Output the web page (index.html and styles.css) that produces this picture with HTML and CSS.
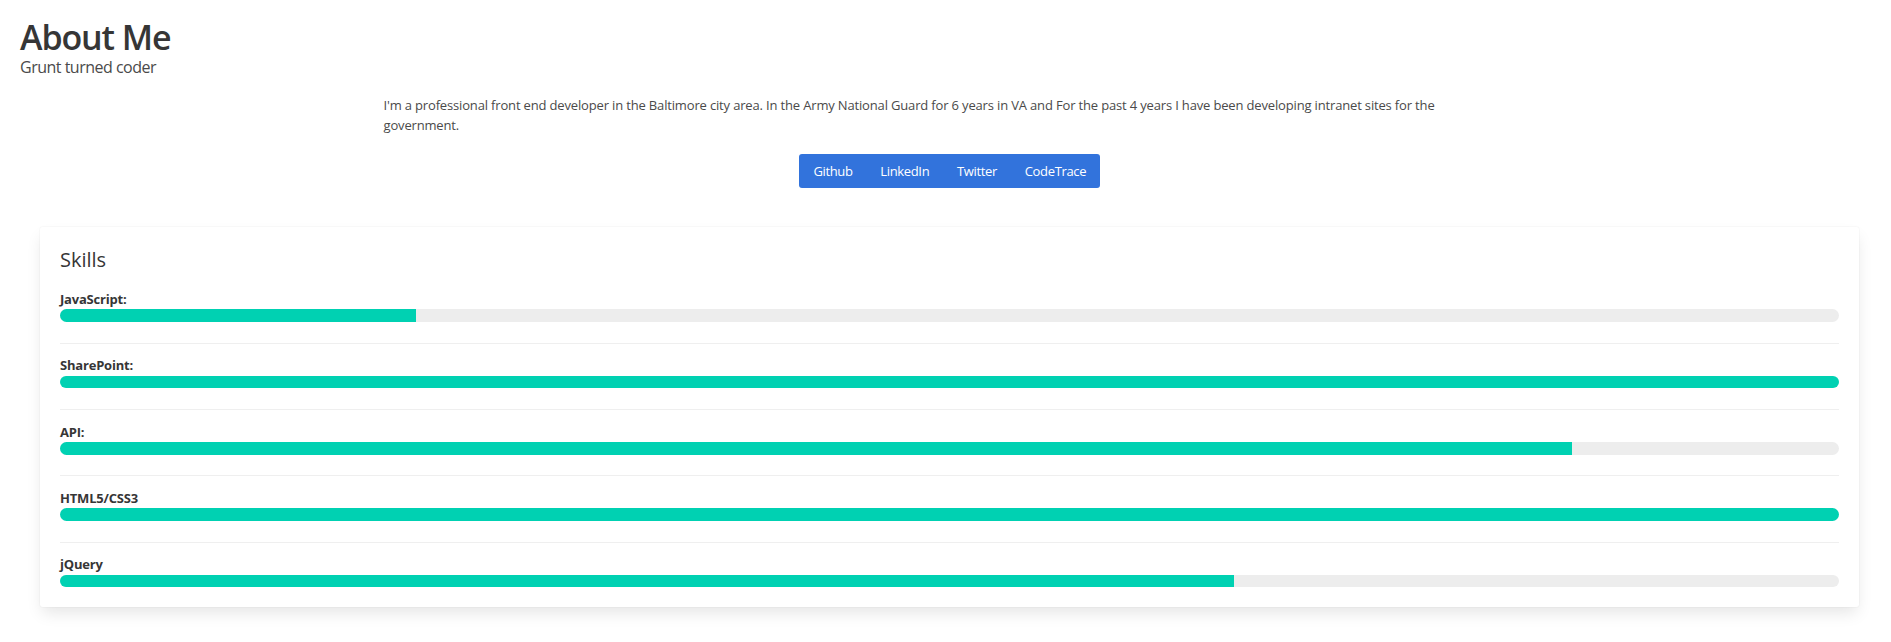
FILE: index.html
```html
<!DOCTYPE html>
<html lang="en">
<head>
<meta charset="utf-8">
<title>About Me</title>
<link rel="stylesheet" href="styles.css">
</head>
<body>
<header class="hero">
  <h1 class="title">About Me</h1>
  <p class="subtitle">Grunt turned coder</p>
</header>
<section class="intro">
  <p class="bio">I'm a professional front end developer in the Baltimore city area. In the Army National Guard for 6 years in VA and For the past 4 years I have been developing intranet sites for the government.</p>
  <nav class="links">
    <a class="link-btn" href="#">Github</a>
    <a class="link-btn" href="#">LinkedIn</a>
    <a class="link-btn" href="#">Twitter</a>
    <a class="link-btn" href="#">CodeTrace</a>
  </nav>
</section>
<section class="card">
  <h2 class="card-title">Skills</h2>
  <div class="skill">
    <div class="skill-label">JavaScript:</div>
    <div class="progress"><div class="progress-fill" style="width:20%"></div></div>
  </div>
  <div class="skill">
    <div class="skill-label">SharePoint:</div>
    <div class="progress"><div class="progress-fill" style="width:100%"></div></div>
  </div>
  <div class="skill">
    <div class="skill-label">API:</div>
    <div class="progress"><div class="progress-fill" style="width:85%"></div></div>
  </div>
  <div class="skill">
    <div class="skill-label">HTML5/CSS3</div>
    <div class="progress"><div class="progress-fill" style="width:100%"></div></div>
  </div>
  <div class="skill">
    <div class="skill-label">jQuery</div>
    <div class="progress"><div class="progress-fill" style="width:66%"></div></div>
  </div>
</section>
</body>
</html>
```
FILE: styles.css
```css
* { box-sizing: border-box; }

body {
  margin: 0;
  background: #fff;
  font-family: "Open Sans", "Noto Sans", sans-serif;
  color: #4a4a4a;
}

.hero {
  padding: 17px 20px 0;
}

.title {
  margin: 0;
  font-size: 34px;
  line-height: 40px;
  letter-spacing: -1.1px;
  font-weight: 600;
  color: #363636;
}

.subtitle {
  margin: 0;
  font-size: 16px;
  line-height: 20px;
  letter-spacing: -0.5px;
  color: #4a4a4a;
}

.intro {
  max-width: 1124px;
  margin: 19.4px auto 0;
  display: flex;
  flex-direction: column;
  align-items: center;
}

.bio {
  margin: 0;
  align-self: stretch;
  font-size: 13px;
  line-height: 19.5px;
  letter-spacing: -0.16px;
  color: #4a4a4a;
}

.links {
  margin: 19.1px 0 0 8.5px;
  display: flex;
  background: #3273dc;
  border-radius: 3px;
}

.link-btn {
  display: block;
  padding: 0 13.9px;
  height: 34px;
  line-height: 34px;
  font-size: 13px;
  letter-spacing: -0.35px;
  color: #fff;
  text-decoration: none;
}

.card {
  margin: 39px 32px 40px 40px;
  padding: 20px;
  background: #fff;
  border-radius: 3px;
  box-shadow: 0 8px 16px -2px rgba(10, 10, 10, 0.1), 0 0 0 1px rgba(10, 10, 10, 0.02);
}

.card-title {
  margin: 0 0 17.5px;
  font-size: 20px;
  line-height: 25px;
  font-weight: 400;
  color: #363636;
}

.skill + .skill {
  margin-top: 20.6px;
  padding-top: 12.5px;
  border-top: 1px solid #efefef;
}

.skill-label {
  font-size: 13px;
  line-height: 19.5px;
  letter-spacing: -0.2px;
  font-weight: 700;
  color: #363636;
}

.progress {
  height: 12.7px;
  background: #ededed;
  border-radius: 9999px;
  overflow: hidden;
}

.progress-fill {
  height: 100%;
  background: #00d1b2;
}
```
